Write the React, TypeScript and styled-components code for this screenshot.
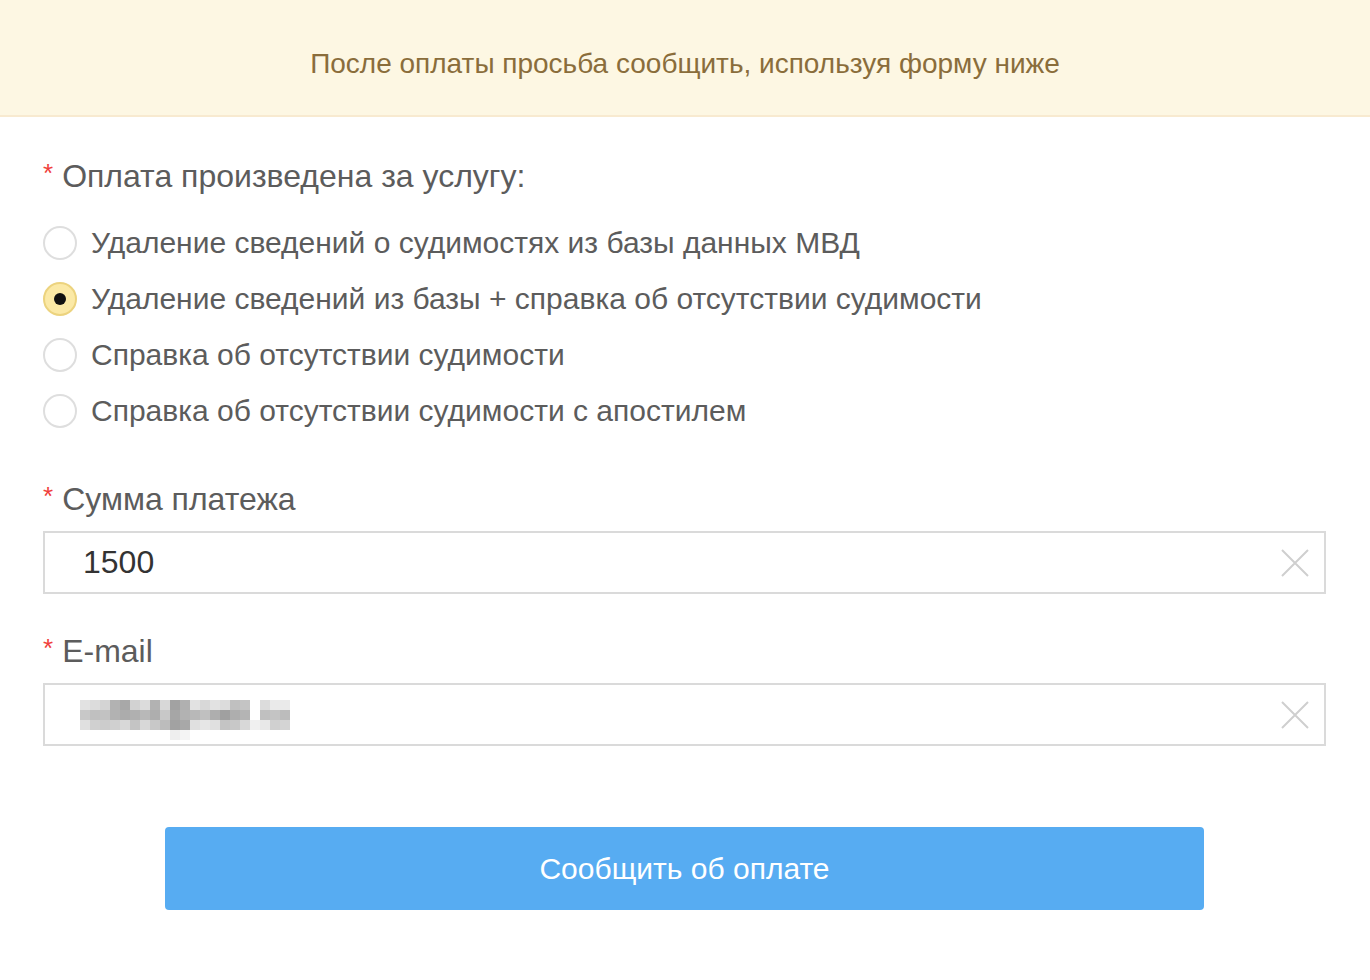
import React, { useState } from 'react';
import styled, { createGlobalStyle } from 'styled-components';

const GlobalStyle = createGlobalStyle`
  html, body {
    margin: 0;
    padding: 0;
    background: #ffffff;
  }
  body {
    font-family: "Liberation Sans", Arial, sans-serif;
  }
`;

const Page = styled.div`
  width: 1370px;
  min-height: 980px;
  background: #fff;
`;

const Notice = styled.div`
  height: 117px;
  background: #fdf7e3;
  border-bottom: 2px solid #f8ead0;
  display: flex;
  align-items: center;
  justify-content: center;
  padding-top: 13px;
  box-sizing: border-box;
  color: #8a6d3b;
  font-size: 28px;
`;

const Form = styled.form`
  padding: 39px 44px 0 43px;
  display: flex;
  flex-direction: column;
`;

const Label = styled.div`
  font-size: 32px;
  color: #5c5c5c;
  height: 40px;
  display: flex;
  align-items: center;
`;

const Star = styled.span`
  color: #f0403c;
  font-size: 26px;
  margin-right: 9px;
  align-self: flex-start;
  margin-top: 2px;
`;

const RadioList = styled.div`
  display: flex;
  flex-direction: column;
  padding-top: 19px;
`;

const RadioRow = styled.label`
  display: flex;
  align-items: center;
  height: 56px;
  gap: 14px;
  font-size: 30px;
  color: #5c5c5c;
  cursor: pointer;
`;

const RadioCircle = styled.span<{ checked: boolean }>`
  width: 34px;
  height: 34px;
  box-sizing: border-box;
  border-radius: 50%;
  border: 2px solid ${(p) => (p.checked ? '#ecd37e' : '#dedede')};
  background: ${(p) => (p.checked ? '#fbe9a6' : '#fff')};
  display: flex;
  align-items: center;
  justify-content: center;
  flex-shrink: 0;

  &::after {
    content: '';
    width: 12px;
    height: 12px;
    border-radius: 50%;
    background: #111;
    display: ${(p) => (p.checked ? 'block' : 'none')};
  }
`;

const Field = styled.div<{ top: number }>`
  display: flex;
  flex-direction: column;
  gap: 12px;
  margin-top: ${(p) => p.top}px;
`;

const InputBox = styled.div`
  height: 63px;
  box-sizing: border-box;
  border: 2px solid #dadada;
  display: flex;
  align-items: center;
  padding: 0 15px 0 38px;
`;

const Input = styled.input`
  flex: 1;
  min-width: 0;
  border: none;
  outline: none;
  font-family: "Liberation Sans", Arial, sans-serif;
  font-size: 32px;
  color: #333;
  background: transparent;
  padding: 0;
`;

const ClearButton = styled.button`
  border: none;
  background: none;
  padding: 0;
  width: 28px;
  height: 28px;
  cursor: pointer;
  display: flex;
  align-items: center;
  justify-content: center;
`;

const Mosaic = styled.svg`
  flex-shrink: 0;
  align-self: flex-start;
  margin: 15px 0 0 -3px;
`;

const ButtonRow = styled.div`
  display: flex;
  padding: 81px 122px 0 122px;
`;

const Submit = styled.button`
  flex: 1;
  height: 83px;
  border: none;
  border-radius: 4px;
  background: #57acf2;
  color: #fff;
  font-family: "Liberation Sans", Arial, sans-serif;
  font-size: 30px;
  cursor: pointer;
`;

const services = [
  'Удаление сведений о судимостях из базы данных МВД',
  'Удаление сведений из базы + справка об отсутствии судимости',
  'Справка об отсутствии судимости',
  'Справка об отсутствии судимости с апостилем',
];

// pixelated e-mail address, one grey value per 10px cell
const mosaicRows = [
  'e2 dc d4 b2 a8 d2 dc b2 d8 a2 b0 e2 d8 e2 dc c0 c4 ff dc ea ea',
  'c8 c0 c2 b2 ac b0 b8 ae c8 a6 b2 b8 c0 ae a0 ae b4 ff c0 c4 bc',
  'e0 d0 cc d0 d8 c4 d8 c8 bc a2 a8 e0 e6 e0 c4 c8 d8 f0 e8 d0 d4',
  'ff ff ff ff ff ff ff ff ff ee f4 ff ff ff ff ff ff ff ff ff ff',
];

const EmailMosaic = () => (
  <Mosaic width="210" height="40" viewBox="0 0 210 40">
    {mosaicRows.map((row, r) =>
      row.split(' ').map((hex, c) => (
        <rect key={`${r}-${c}`} x={c * 10} y={r * 10} width="10" height="10" fill={`#${hex}${hex}${hex}`} />
      ))
    )}
  </Mosaic>
);

const CloseIcon = () => (
  <svg width="28" height="28" viewBox="0 0 28 28">
    <path d="M1 1 L27 27 M27 1 L1 27" stroke="#cfcfcf" strokeWidth="2" fill="none" />
  </svg>
);

const App = () => {
  const [service, setService] = useState(1);
  const [amount, setAmount] = useState('1500');

  return (
    <Page>
      <GlobalStyle />
      <Notice>После оплаты просьба сообщить, используя форму ниже</Notice>
      <Form onSubmit={(e) => e.preventDefault()}>
        <Label>
          <Star>*</Star>Оплата произведена за услугу:
        </Label>
        <RadioList>
          {services.map((s, i) => (
            <RadioRow key={s} onClick={() => setService(i)}>
              <RadioCircle checked={service === i} />
              {s}
            </RadioRow>
          ))}
        </RadioList>
        <Field top={40}>
          <Label>
            <Star>*</Star>Сумма платежа
          </Label>
          <InputBox>
            <Input value={amount} onChange={(e) => setAmount(e.target.value)} />
            <ClearButton type="button" onClick={() => setAmount('')}>
              <CloseIcon />
            </ClearButton>
          </InputBox>
        </Field>
        <Field top={37}>
          <Label>
            <Star>*</Star>E-mail
          </Label>
          <InputBox>
            <EmailMosaic />
            <Input readOnly value="" />
            <ClearButton type="button">
              <CloseIcon />
            </ClearButton>
          </InputBox>
        </Field>
        <ButtonRow>
          <Submit type="submit">Сообщить об оплате</Submit>
        </ButtonRow>
      </Form>
    </Page>
  );
};

export default App;
